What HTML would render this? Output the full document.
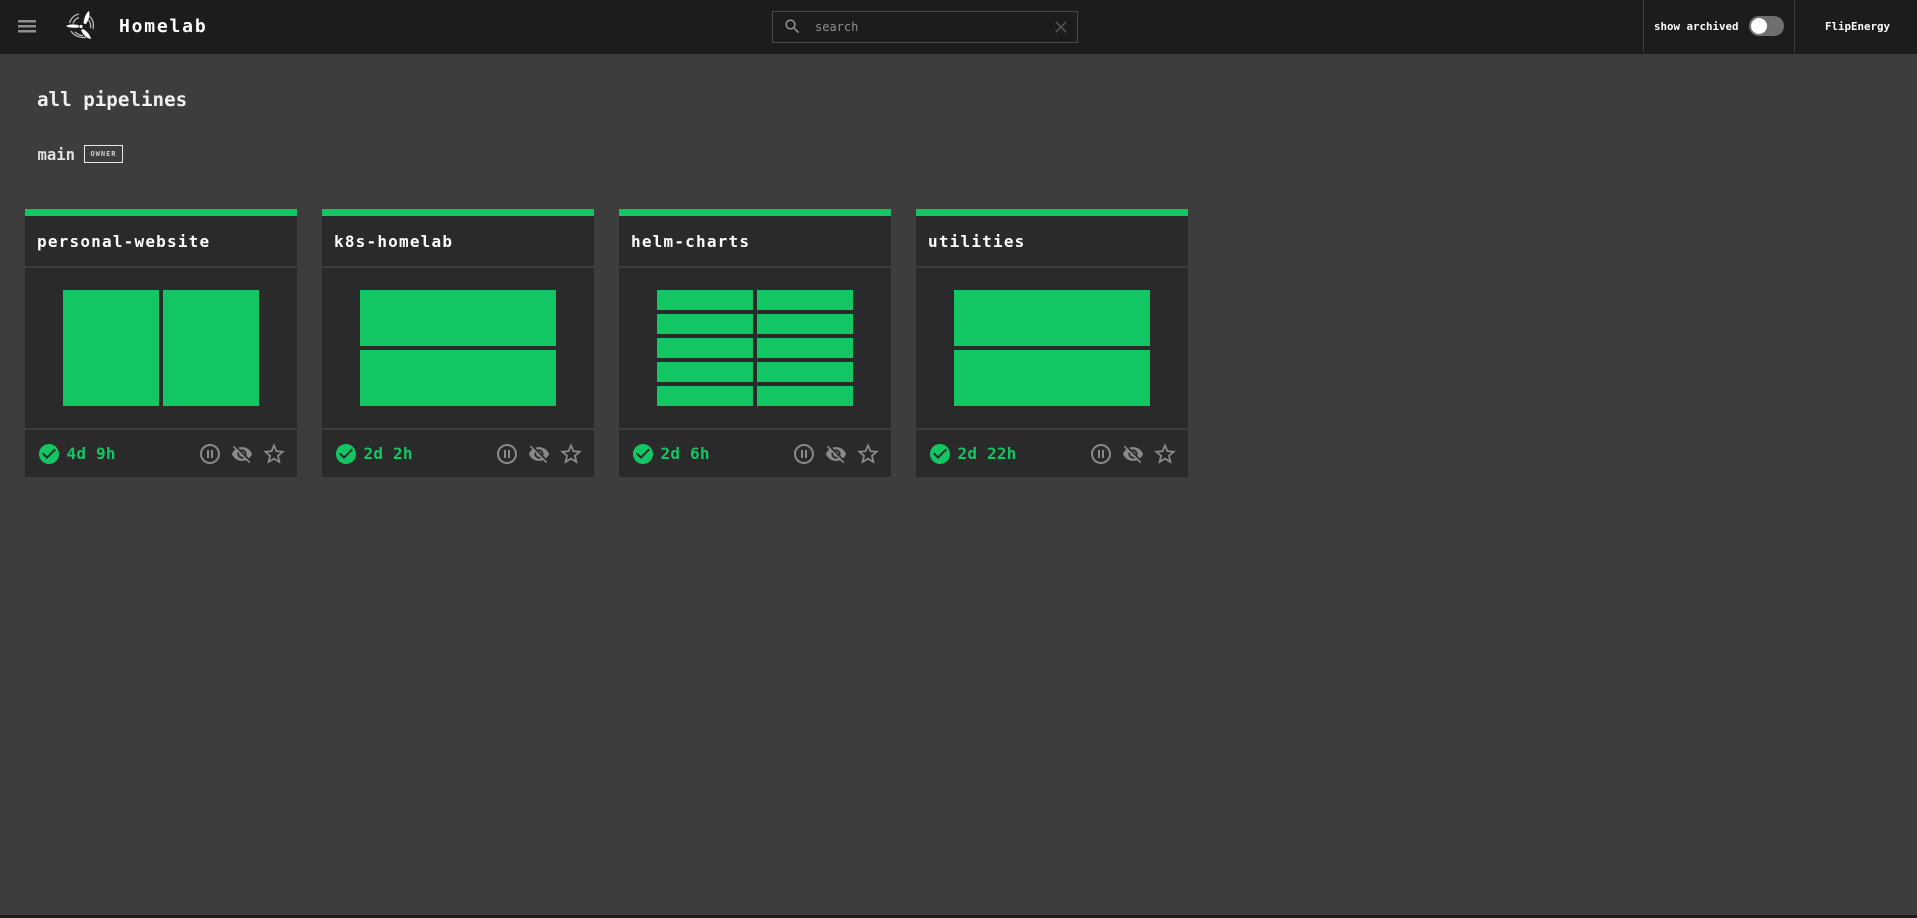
<!DOCTYPE html>
<html lang="en">
<head>
<meta charset="utf-8">
<title>Homelab</title>
<style>
*{box-sizing:border-box}
html,body{margin:0;padding:0}
body{width:1917px;height:918px;position:relative;overflow:hidden;background:#3d3d3d;font-family:"DejaVu Sans Mono","Liberation Mono",monospace;color:#fff}
.a{position:absolute;white-space:nowrap}
.top{left:0;top:0;width:1917px;height:54px;background:#1c1c1c}
.bot{left:0;top:915px;width:1917px;height:3px;background:#1c1c1c}
.card{position:absolute;top:209px;width:272px;height:268px;background:#2a2a2a}
.card .bar{position:absolute;left:0;top:0;width:272px;height:7px;background:#12c664}
.card .d1,.card .d2{position:absolute;left:0;width:272px;height:2px;background:#3d3d3d}
.card .d1{top:57px}.card .d2{top:219px}
.card .name{position:absolute;left:12px;top:22px;line-height:22px;font-size:16px;font-weight:700;letter-spacing:1.2px;color:#fff}
.card .t{position:absolute;background:#12c664}
.card .time{position:absolute;left:41.500px;top:235px;line-height:20px;font-size:16px;font-weight:700;color:#12c664;letter-spacing:.2px}
.card svg{position:absolute}
.ck{left:12px;top:233px;fill:#12c664}
.pa{left:173px;top:233px;fill:#8a8a8a}
.ey{left:206px;top:234px;fill:#8a8a8a}
.st{left:236px;top:232px;fill:#8a8a8a}
</style>
</head>
<body>
<svg width="0" height="0" style="position:absolute">
<symbol id="check" viewBox="0 0 24 24"><path d="M12 2C6.480 2 2 6.480 2 12s4.480 10 10 10 10-4.480 10-10S17.520 2 12 2zm-2 15l-5-5 1.410-1.410L10 14.170l7.590-7.590L19 8l-9 9z"/></symbol>
<symbol id="pause" viewBox="0 0 24 24"><path d="M9 16h2V8H9v8zm3-14C6.480 2 2 6.480 2 12s4.480 10 10 10 10-4.480 10-10S17.520 2 12 2zm0 18c-4.410 0-8-3.590-8-8s3.590-8 8-8 8 3.590 8 8-3.590 8-8 8zm1-4h2V8h-2v8z"/></symbol>
<symbol id="eye" viewBox="0 0 24 24"><path d="M12 7c2.760 0 5 2.240 5 5 0 .65-.13 1.260-.36 1.830l2.920 2.920c1.510-1.260 2.700-2.890 3.430-4.750-1.730-4.390-6-7.500-11-7.500-1.400 0-2.740.25-3.980.7l2.160 2.160C10.740 7.130 11.350 7 12 7zM2 4.270l2.280 2.280.46.46C3.080 8.300 1.780 10.020 1 12c1.730 4.390 6 7.500 11 7.500 1.550 0 3.030-.3 4.380-.84l.42.42L19.730 22 21 20.730 3.270 3 2 4.270zM7.530 9.800l1.550 1.550c-.05.21-.08.43-.08.65 0 1.660 1.340 3 3 3 .22 0 .44-.03.65-.08l1.550 1.550c-.67.33-1.410.53-2.200.53-2.760 0-5-2.240-5-5 0-.79.2-1.530.53-2.200zm4.310-.78l3.150 3.150.02-.16c0-1.660-1.340-3-3-3l-.17.01z"/></symbol>
<symbol id="star" viewBox="0 0 24 24"><path d="M22 9.240l-7.190-.62L12 2 9.190 8.630 2 9.240l5.460 4.730L5.820 21 12 17.270 18.180 21l-1.630-7.030L22 9.240zM12 15.400l-3.760 2.270 1-4.280-3.320-2.880 4.380-.38L12 6.100l1.710 4.040 4.380.38-3.320 2.880 1 4.280L12 15.400z"/></symbol>
</svg>

<div class="a top"></div>
<div class="a bot"></div>

<svg class="a" style="left:18px;top:20px" width="18" height="13" viewBox="0 0 18 13"><path fill="#8f8f8f" d="M0 0h18v2.500H0zM0 5h18v2.500H0zM0 10h18v2.500H0z"/></svg>

<svg class="a" style="left:64px;top:9px" width="34" height="34" viewBox="0 0 34 34">
<path fill="#fff" d="M19.500 14.500C20 9 22 4 25 2c1 3 .5 8-3 13z"/>
<path fill="#fff" d="M2 17c4-2 9-2 13-.5l-.5 2C10 19 5 19 2 17z"/>
<path fill="#fff" d="M19 20c4 2 7 6 8 10-4-.5-8-4-10-9z"/>
<circle cx="17" cy="17.500" r="1.600" fill="#fff"/>
<g fill="none" stroke="#b8b8b8" stroke-width="1.300">
<path d="M5.500 14C7 9 10.500 6 15 5"/><path d="M9 14.500C10 11.500 12 9.500 15 8.500"/>
<path d="M25 7c4 3 5 8 4 13"/><path d="M24.500 11c1.800 2 2.500 4.500 2 8"/>
<path d="M7 22c3 5 9 7 15 6.500"/><path d="M11 23c2 2 5 3.500 8 3.500"/>
</g>
</svg>

<div class="a" style="left:119px;top:16px;line-height:22px;font-size:18px;font-weight:700;letter-spacing:1.800px;color:#fff">Homelab</div>

<div class="a" style="left:772px;top:11px;width:306px;height:32px;border:1px solid #4a4a4a"></div>
<svg class="a" style="left:783px;top:17px" width="19" height="19" viewBox="0 0 24 24"><path fill="#8f8f8f" d="M15.500 14h-.79l-.28-.27C15.410 12.590 16 11.110 16 9.500 16 5.910 13.090 3 9.500 3S3 5.910 3 9.500 5.910 16 9.500 16c1.610 0 3.090-.59 4.230-1.570l.27.28v.79l5 4.990L20.490 19l-4.990-5zm-6 0C7.010 14 5 11.990 5 9.500S7.010 5 9.500 5 14 7.010 14 9.500 11.990 14 9.500 14z"/></svg>
<div class="a" style="left:815px;top:19px;line-height:16px;font-size:12px;color:#8a8f94">search</div>
<svg class="a" style="left:1055px;top:21px" width="12" height="12" viewBox="0 0 12 12"><path stroke="#5a5a5a" stroke-width="1.400" d="M1 1l10 10M11 1L1 11"/></svg>

<div class="a" style="left:1643px;top:0;width:1px;height:53px;background:#3d3d3d"></div>
<div class="a" style="left:1794px;top:0;width:1px;height:53px;background:#3d3d3d"></div>
<div class="a" style="left:1654px;top:20px;line-height:14px;font-size:10.800px;font-weight:700;color:#fff">show archived</div>
<div class="a" style="left:1749px;top:16px;width:35px;height:20px;border-radius:10px;background:#6f6f6f"></div>
<div class="a" style="left:1751px;top:18px;width:16px;height:16px;border-radius:50%;background:#fff"></div>
<div class="a" style="left:1825px;top:20px;line-height:14px;font-size:10.800px;font-weight:700;color:#fff">FlipEnergy</div>

<div class="a" style="left:37px;top:88px;line-height:24px;font-size:19.200px;font-weight:700;color:#f0f0f0">all pipelines</div>
<div class="a" style="left:37.500px;top:145px;line-height:20px;font-size:15.600px;font-weight:700;color:#e0e0e0">main</div>
<div class="a" style="left:84px;top:145px;width:39px;height:18px;border:1px solid #e8e8e8;text-align:center;line-height:16px;font-size:7px;font-weight:700;letter-spacing:1px;color:#d0d0d0">OWNER</div>

<!-- card 1 -->
<div class="card" style="left:25px">
<div class="bar"></div><div class="d1"></div><div class="d2"></div>
<div class="name">personal-website</div>
<div class="t" style="left:38px;top:81px;width:96px;height:116px"></div>
<div class="t" style="left:138px;top:81px;width:96px;height:116px"></div>
<svg class="ck" width="24" height="24"><use href="#check"/></svg>
<div class="time">4d 9h</div>
<svg class="pa" width="24" height="24"><use href="#pause"/></svg>
<svg class="ey" width="22" height="22"><use href="#eye"/></svg>
<svg class="st" width="26" height="26"><use href="#star"/></svg>
</div>

<!-- card 2 -->
<div class="card" style="left:322px">
<div class="bar"></div><div class="d1"></div><div class="d2"></div>
<div class="name">k8s-homelab</div>
<div class="t" style="left:38px;top:81px;width:196px;height:56px"></div>
<div class="t" style="left:38px;top:141px;width:196px;height:56px"></div>
<svg class="ck" width="24" height="24"><use href="#check"/></svg>
<div class="time">2d 2h</div>
<svg class="pa" width="24" height="24"><use href="#pause"/></svg>
<svg class="ey" width="22" height="22"><use href="#eye"/></svg>
<svg class="st" width="26" height="26"><use href="#star"/></svg>
</div>

<!-- card 3 -->
<div class="card" style="left:619px">
<div class="bar"></div><div class="d1"></div><div class="d2"></div>
<div class="name">helm-charts</div>
<div class="t" style="left:38px;top:81px;width:96px;height:20px"></div>
<div class="t" style="left:138px;top:81px;width:96px;height:20px"></div>
<div class="t" style="left:38px;top:105px;width:96px;height:20px"></div>
<div class="t" style="left:138px;top:105px;width:96px;height:20px"></div>
<div class="t" style="left:38px;top:129px;width:96px;height:20px"></div>
<div class="t" style="left:138px;top:129px;width:96px;height:20px"></div>
<div class="t" style="left:38px;top:153px;width:96px;height:20px"></div>
<div class="t" style="left:138px;top:153px;width:96px;height:20px"></div>
<div class="t" style="left:38px;top:177px;width:96px;height:20px"></div>
<div class="t" style="left:138px;top:177px;width:96px;height:20px"></div>
<svg class="ck" width="24" height="24"><use href="#check"/></svg>
<div class="time">2d 6h</div>
<svg class="pa" width="24" height="24"><use href="#pause"/></svg>
<svg class="ey" width="22" height="22"><use href="#eye"/></svg>
<svg class="st" width="26" height="26"><use href="#star"/></svg>
</div>

<!-- card 4 -->
<div class="card" style="left:916px">
<div class="bar"></div><div class="d1"></div><div class="d2"></div>
<div class="name">utilities</div>
<div class="t" style="left:38px;top:81px;width:196px;height:56px"></div>
<div class="t" style="left:38px;top:141px;width:196px;height:56px"></div>
<svg class="ck" width="24" height="24"><use href="#check"/></svg>
<div class="time">2d 22h</div>
<svg class="pa" width="24" height="24"><use href="#pause"/></svg>
<svg class="ey" width="22" height="22"><use href="#eye"/></svg>
<svg class="st" width="26" height="26"><use href="#star"/></svg>
</div>
</body>
</html>
